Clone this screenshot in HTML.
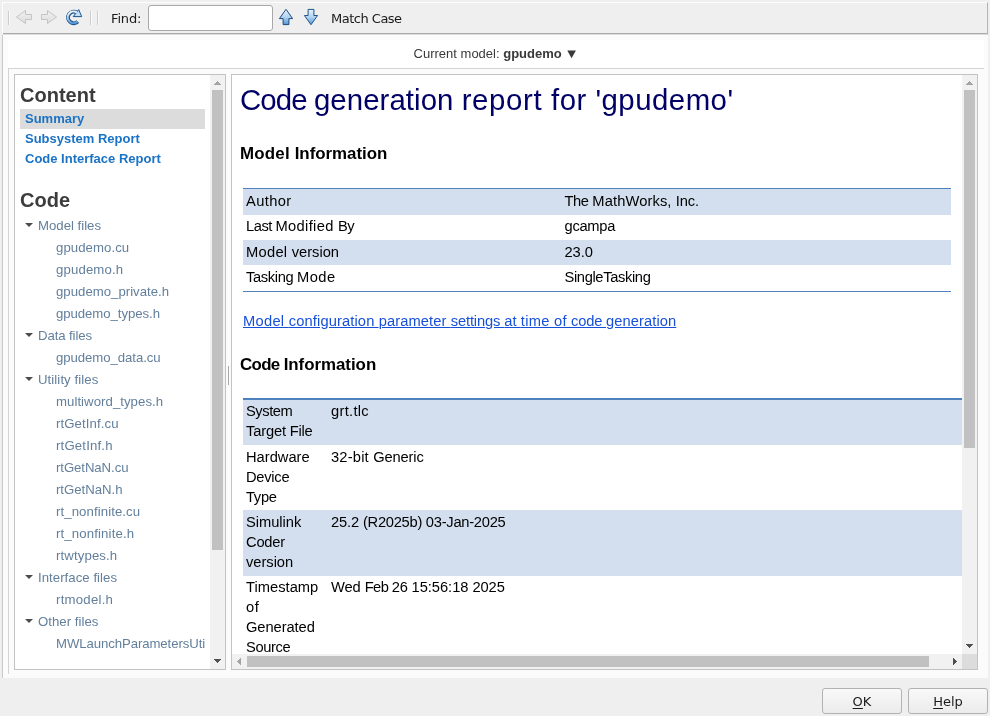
<!DOCTYPE html>
<html lang="en">
<head>
<meta charset="utf-8">
<title>Code generation report for 'gpudemo'</title>
<style>
*{box-sizing:border-box;margin:0;padding:0}
html,body{width:990px;height:716px;overflow:hidden}
body{background:#efefef;position:relative;font-family:"DejaVu Sans","Liberation Sans",sans-serif;font-size:13px;color:#1a1a1a}
.abs{position:absolute}
/* toolbar */
#toolbar{left:2px;top:2px;width:986px;height:33px;background:#efefef;border-left:1px solid #fdfdfd;border-top:1px solid #fdfdfd;border-right:1px solid #b4b4b4;border-bottom:1px solid #dedede;box-shadow:inset 0 -1px 0 #a9a9a9}
.sep{width:1px;height:14px;top:11px;background:#cdcdcd;box-shadow:1px 0 0 #fafafa}
.tbtxt{font-family:"DejaVu Sans","Liberation Sans",sans-serif;font-size:13px;color:#1a1a1a;line-height:16px;white-space:nowrap}
#find{left:148px;top:5px;width:125px;height:26px;background:#fff;border:1px solid #a9a9a9;border-radius:3px;outline:none;padding:0 4px;font-family:"DejaVu Sans",sans-serif;font-size:13px}
/* main */
#mainbg{left:2px;top:35px;width:986px;height:643px;background:#fbfbfb;border-left:1px solid #c9c9c9}
#mainwhite{left:8px;top:40px;width:976px;height:28px;background:#fff}
#curmodel{left:413.6px;top:40px;width:300px;height:28px;text-align:left;font-family:"Liberation Sans",sans-serif;font-size:13px;line-height:28px;color:#3a3a3a;white-space:nowrap}
#curmodel b{color:#3a3a3a}
#hline{left:8px;top:68px;width:976px;height:1px;background:#d4d4d4}
#vline{left:8px;top:68px;width:1px;height:606px;background:#d4d4d4}
.panel{background:#fff;border:1px solid #c3c3c3;overflow:hidden}
#lpanel{left:14px;top:74px;width:212px;height:596px}
#rpanel{left:231px;top:74px;width:747px;height:596px}
.vtrack{background:#f1f1f1;width:15px}
.thumb{background:#c1c1c1}
.tri{width:0;height:0}
/* nav */
#nav{font-family:"Liberation Sans",sans-serif}
.h{font-family:"Liberation Sans",sans-serif;font-weight:bold;font-size:20px;color:#3c3c3c;line-height:24px;white-space:nowrap}
.navitem{left:5px;width:185px;height:20px;font-family:"Liberation Sans",sans-serif;font-weight:bold;font-size:13px;line-height:20px;color:#1a73c4;padding-left:5px;white-space:nowrap}
.navitem.sel{background:#dcdcdc}
.tree{font-family:"Liberation Sans","DejaVu Sans",sans-serif;font-size:13.2px;color:#627f9c;line-height:22px;white-space:nowrap}
.tree div{position:absolute;height:22px}
.tree .g{left:23px}
.tree .f{left:41px}
.tree .g:before{content:"";position:absolute;left:-13px;top:8px;border-left:4px solid transparent;border-right:4px solid transparent;border-top:4px solid #4c4c4c}
/* report */
#report{font-family:"Liberation Sans",sans-serif;color:#000}
.t{white-space:nowrap;font-family:"Liberation Sans",sans-serif;margin:0}
.ttl{font-size:29.4px;line-height:36px;color:#000066;font-weight:normal}
.h3{font-size:16.9px;line-height:20px;color:#000;font-weight:bold}
.c{font-size:14.7px;line-height:20px;color:#000}
.lnk{color:#1650d8;text-decoration:underline}
.btn{top:688px;width:80px;height:26px;border:1px solid #b2b2b2;border-radius:3px;background:linear-gradient(#f9f9f9,#ebebeb);text-align:center;font-family:"DejaVu Sans",sans-serif;font-size:13px;line-height:22px;color:#1a1a1a;padding:2px 0 0 0;display:block}
.btn u{text-decoration:underline;text-underline-offset:2px}
</style>
</head>
<body>
<div class="abs" id="app" style="left:0;top:0;width:990px;height:716px;will-change:transform">
<div class="abs" id="toolbar"></div>
<div class="abs sep" style="left:8px"></div>
<svg class="abs" style="left:0;top:0" width="330" height="34" viewBox="0 0 330 34">
<defs>
<linearGradient id="gg" x1="0" y1="0" x2="0" y2="1"><stop offset="0" stop-color="#f2f2f2"/><stop offset="1" stop-color="#dcdcdc"/></linearGradient>
<linearGradient id="rg" x1="0" y1="0" x2="0" y2="1"><stop offset="0" stop-color="#f2f8fd"/><stop offset="0.5" stop-color="#b9d8f2"/><stop offset="1" stop-color="#5a9cd8"/></linearGradient>
<linearGradient id="ag" x1="0" y1="0" x2="0" y2="1"><stop offset="0" stop-color="#eaf3fc"/><stop offset="0.5" stop-color="#b3d3f0"/><stop offset="1" stop-color="#5495d4"/></linearGradient>
</defs>
<path d="M16.5 17 L25.5 10.5 V14.5 H31.5 V19.5 H25.5 V23.5 Z" fill="url(#gg)" stroke="#c4c4c4" stroke-width="1" stroke-linejoin="round"/>
<path d="M56.5 17 L47.5 10.5 V14.5 H41.5 V19.5 H47.5 V23.5 Z" fill="url(#gg)" stroke="#c4c4c4" stroke-width="1" stroke-linejoin="round"/>
<g transform="translate(66 9)">
<path d="M10.55 3.37 A5.75 5.75 0 1 0 11.75 12.65" fill="none" stroke="#1f548c" stroke-width="3.9" stroke-linecap="butt"/>
<path d="M7.2 7.6 L15.7 7.6 L12.7 0.6 Z" fill="#a9cff0" stroke="#1f548c" stroke-width="1" stroke-linejoin="round"/>
<path d="M10.9 3.6 A5.75 5.75 0 1 0 11.45 12.4" fill="none" stroke="url(#rg)" stroke-width="2.1" stroke-linecap="butt"/>
<path d="M9.4 6.9 L14.6 6.9 L12.6 2.2 Z" fill="#c3dff5"/>
</g>
<path d="M286 9.3 L292.6 18.6 H288.9 V24.6 H283.1 V18.6 H279.4 Z" fill="url(#ag)" stroke="#1c4b80" stroke-width="1" stroke-linejoin="round"/>
<path d="M311 24.7 L317.6 15.5 H313.9 V9.4 H308.1 V15.5 H304.4 Z" fill="url(#ag)" stroke="#1f548c" stroke-width="1" stroke-linejoin="round"/>
</svg>
<div class="abs sep" style="left:90px"></div>
<div class="abs sep" style="left:97px"></div>
<div class="abs tbtxt" style="left:111px;top:11px;letter-spacing:-0.15px">Find:</div>
<input class="abs" id="find" type="text" value="" aria-label="Find">
<div class="abs tbtxt" style="left:331px;top:11px;letter-spacing:-0.5px">Match Case</div>

<div class="abs" id="mainbg"></div>
<div class="abs" id="mainwhite"></div>
<div class="abs" id="curmodel">Current model: <b>gpudemo</b> <span style="display:inline-block;font-family:'DejaVu Sans',sans-serif;font-size:11.3px;line-height:12px;transform:scaleY(.9);margin-left:2px;position:relative;top:-1px">&#9660;</span></div>
<div class="abs" id="hline"></div>
<div class="abs" id="vline"></div>

<div class="abs panel" id="lpanel">
  <div id="nav">
    <div class="abs h" style="left:5px;top:8px">Content</div>
    <a class="abs navitem sel" style="top:34px">Summary</a>
    <a class="abs navitem" style="top:54px">Subsystem Report</a>
    <a class="abs navitem" style="top:74px">Code Interface Report</a>
    <div class="abs h" style="left:5px;top:113px">Code</div>
    <div class="tree abs" style="left:0;top:0;width:190px;height:594px;overflow:hidden">
      <div class="g" style="top:140px;letter-spacing:0px">Model files</div>
      <div class="f" style="top:162px;letter-spacing:0.06px">gpudemo.cu</div>
      <div class="f" style="top:184px;letter-spacing:0.14px">gpudemo.h</div>
      <div class="f" style="top:206px;letter-spacing:0.01px">gpudemo_private.h</div>
      <div class="f" style="top:228px;letter-spacing:-0.06px">gpudemo_types.h</div>
      <div class="g" style="top:250px;letter-spacing:-0.1px">Data files</div>
      <div class="f" style="top:272px;letter-spacing:-0.07px">gpudemo_data.cu</div>
      <div class="g" style="top:294px;letter-spacing:0.08px">Utility files</div>
      <div class="f" style="top:316px;letter-spacing:0.05px">multiword_types.h</div>
      <div class="f" style="top:338px;letter-spacing:0.09px">rtGetInf.cu</div>
      <div class="f" style="top:360px;letter-spacing:0.17px">rtGetInf.h</div>
      <div class="f" style="top:382px;letter-spacing:-0.08px">rtGetNaN.cu</div>
      <div class="f" style="top:404px;letter-spacing:-0.02px">rtGetNaN.h</div>
      <div class="f" style="top:426px;letter-spacing:0.09px">rt_nonfinite.cu</div>
      <div class="f" style="top:448px;letter-spacing:0.14px">rt_nonfinite.h</div>
      <div class="f" style="top:470px;letter-spacing:0.12px">rtwtypes.h</div>
      <div class="g" style="top:492px;letter-spacing:0.04px">Interface files</div>
      <div class="f" style="top:514px;letter-spacing:0.24px">rtmodel.h</div>
      <div class="g" style="top:536px;letter-spacing:0.03px">Other files</div>
      <div class="f" style="top:558px;letter-spacing:-0.09px">MWLaunchParametersUtilities.cu</div>
    </div>
  </div>
  <div class="abs vtrack" style="right:0;top:0;height:594px"></div>
  <div class="abs thumb" style="left:197px;top:15px;width:11px;height:460px"></div>
  <svg class="abs" style="left:199px;top:6px" width="7" height="4" viewBox="0 0 7 4" shape-rendering="crispEdges"><polygon points="0,4 7,4 3.5,0" fill="#a3a3a3"/></svg>
  <svg class="abs" style="left:199px;top:584px" width="7" height="4" viewBox="0 0 7 4" shape-rendering="crispEdges"><polygon points="0,0 7,0 3.5,4" fill="#505050"/></svg>
</div>

<div class="abs" id="grip" style="left:228px;top:366px;width:1px;height:19px;background:#a9a9a9"></div>

<div class="abs panel" id="rpanel">
  <div id="report">
    <div class="abs" style="left:11px;top:113px;width:708px;height:1px;background:#4f81bd"></div>
    <div class="abs" style="left:11px;top:114px;width:708px;height:25.6px;background:#d3dfee"></div>
    <div class="abs" style="left:11px;top:165px;width:708px;height:24.7px;background:#d3dfee"></div>
    <div class="abs" style="left:11px;top:216px;width:708px;height:1px;background:#4f81bd"></div>
    <div class="abs" style="left:11px;top:323px;width:730px;height:2px;background:#4f81bd"></div>
    <div class="abs" style="left:11px;top:325px;width:730px;height:44.7px;background:#d3dfee"></div>
    <div class="abs" style="left:11px;top:435.1px;width:730px;height:65.6px;background:#d3dfee"></div>
    <h1 class="abs t ttl" style="left:8px;top:7px"><span style="letter-spacing:-0.9px">Code </span><span style="letter-spacing:0.06px">generation </span><span style="letter-spacing:0.64px">report </span><span style="letter-spacing:0.47px">for </span><span style="letter-spacing:0.47px">'gpudemo'</span></h1>
    <h3 class="abs t h3" style="left:8px;top:69px"><span style="letter-spacing:0.2px">Model </span><span style="letter-spacing:-0.03px">Information</span></h3>
    <div class="abs t c" style="left:14px;top:115.75px"><span style="letter-spacing:0.36px">Author</span></div>
    <div class="abs t c" style="left:332.5px;top:115.75px"><span style="letter-spacing:-0.4px">The </span><span style="letter-spacing:0.12px">MathWorks, </span><span style="letter-spacing:-0.11px">Inc.</span></div>
    <div class="abs t c" style="left:14px;top:141.25px"><span style="letter-spacing:-0.48px">Last </span><span style="letter-spacing:0.34px">Modified </span><span style="letter-spacing:-0.68px">By</span></div>
    <div class="abs t c" style="left:332.5px;top:141.25px"><span style="letter-spacing:-0.28px">gcampa</span></div>
    <div class="abs t c" style="left:14px;top:166.75px"><span style="letter-spacing:0.28px">Model </span><span style="letter-spacing:-0.03px">version</span></div>
    <div class="abs t c" style="left:332.5px;top:166.75px"><span style="letter-spacing:-0.05px">23.0</span></div>
    <div class="abs t c" style="left:14px;top:192.25px"><span style="letter-spacing:-0.36px">Tasking </span><span style="letter-spacing:0.44px">Mode</span></div>
    <div class="abs t c" style="left:332.5px;top:192.25px"><span style="letter-spacing:-0.36px">SingleTasking</span></div>
    <a class="abs t c lnk" style="left:11px;top:235.5px"><span style="letter-spacing:0.28px">Model </span><span style="letter-spacing:0.12px">configuration </span><span style="letter-spacing:0.1px">parameter </span><span style="letter-spacing:-0.12px">settings </span><span style="letter-spacing:0.05px">at </span><span style="letter-spacing:0.29px">time </span><span style="letter-spacing:0.2px">of </span><span style="letter-spacing:-0.18px">code </span><span style="letter-spacing:0.08px">generation</span></a>
    <h3 class="abs t h3" style="left:8px;top:280px"><span style="letter-spacing:-0.66px">Code </span><span style="letter-spacing:-0.03px">Information</span></h3>
    <div class="abs t c" style="left:14px;top:325.6px"><span style="letter-spacing:-0.45px">System</span><br><span style="letter-spacing:-0.15px">Target </span><span style="letter-spacing:-0.25px">File</span></div>
    <div class="abs t c" style="left:99px;top:325.6px"><span style="letter-spacing:0.29px">grt.tlc</span></div>
    <div class="abs t c" style="left:14px;top:371.5px"><span style="letter-spacing:0px">Hardware</span><br><span style="letter-spacing:-0.26px">Device</span><br><span style="letter-spacing:-0.29px">Type</span></div>
    <div class="abs t c" style="left:99px;top:371.5px"><span style="letter-spacing:0.19px">32-bit </span><span style="letter-spacing:-0.14px">Generic</span></div>
    <div class="abs t c" style="left:14px;top:436.5px"><span style="letter-spacing:-0.03px">Simulink</span><br><span style="letter-spacing:-0.22px">Coder</span><br><span style="letter-spacing:-0.03px">version</span></div>
    <div class="abs t c" style="left:99px;top:436.5px"><span style="letter-spacing:-0.14px">25.2 </span><span style="letter-spacing:-0.27px">(R2025b) </span><span style="letter-spacing:-0.26px">03-Jan-2025</span></div>
    <div class="abs t c" style="left:14px;top:501.5px"><span style="letter-spacing:0.02px">Timestamp</span><br><span style="letter-spacing:0.54px">of</span><br><span style="letter-spacing:-0.07px">Generated</span><br><span style="letter-spacing:-0.38px">Source</span></div>
    <div class="abs t c" style="left:99px;top:501.5px"><span style="letter-spacing:-0.1px">Wed </span><span style="letter-spacing:-0.57px">Feb </span><span style="letter-spacing:-0.19px">26 </span><span style="letter-spacing:-0.05px">15:56:18 </span><span style="letter-spacing:-0.06px">2025</span></div>
  </div>
  <div class="abs vtrack" style="right:0;top:0;height:579px"></div>
  <div class="abs thumb" style="left:732px;top:15px;width:11px;height:358px"></div>
  <svg class="abs" style="left:734px;top:6px" width="7" height="4" viewBox="0 0 7 4" shape-rendering="crispEdges"><polygon points="0,4 7,4 3.5,0" fill="#a3a3a3"/></svg>
  <svg class="abs" style="left:734px;top:569px" width="7" height="4" viewBox="0 0 7 4" shape-rendering="crispEdges"><polygon points="0,0 7,0 3.5,4" fill="#505050"/></svg>
  <div class="abs" style="left:0;top:579px;width:730px;height:15px;background:#f1f1f1"></div>
  <div class="abs thumb" style="left:15px;top:581px;width:682px;height:11px"></div>
  <svg class="abs" style="left:5px;top:583px" width="4" height="7" viewBox="0 0 4 7" shape-rendering="crispEdges"><polygon points="4,0 4,7 0,3.5" fill="#a3a3a3"/></svg>
  <svg class="abs" style="left:721px;top:583px" width="4" height="7" viewBox="0 0 4 7" shape-rendering="crispEdges"><polygon points="0,0 0,7 4,3.5" fill="#505050"/></svg>
  <div class="abs" style="left:730px;top:579px;width:15px;height:15px;background:#dcdcdc"></div>
</div>

<button class="abs btn" style="left:822px"><u>O</u>K</button>
<button class="abs btn" style="left:908px"><u>H</u>elp</button>
</div>
</body>
</html>
